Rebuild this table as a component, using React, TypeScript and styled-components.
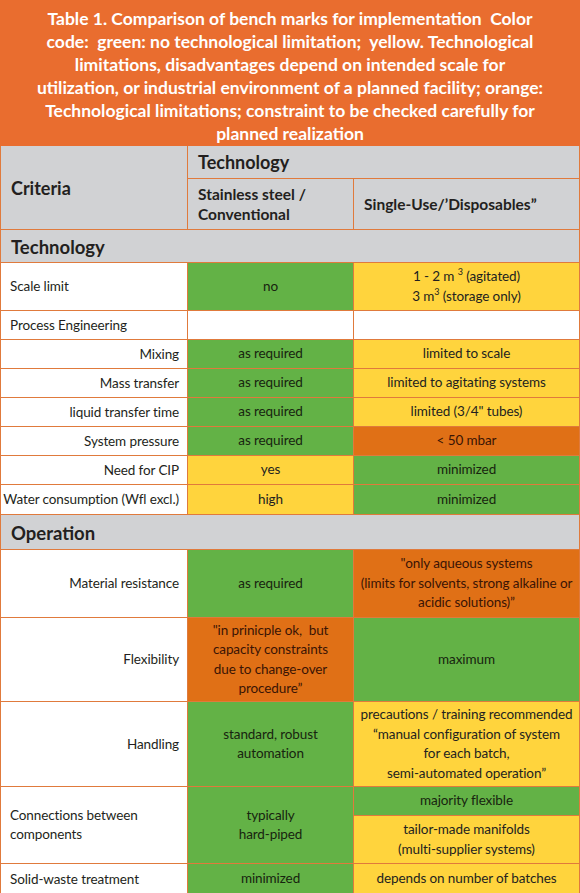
import React from 'react';
import styled, { createGlobalStyle } from 'styled-components';

type Tone = 'green' | 'yellow' | 'orange' | 'white';

const tones: Record<Tone, string> = {
  green: '#63b246',
  yellow: '#ffd43d',
  orange: '#e07016',
  white: '#ffffff',
};

const GlobalStyle = createGlobalStyle`
  html, body {
    margin: 0;
    padding: 0;
    background: #ffffff;
  }
  body {
    font-family: Lato, "Open Sans", sans-serif;
    color: #231f20;
  }
`;

// Orange caption block above the table
const Caption = styled.div`
  height: 146px;
  box-sizing: border-box;
  padding-top: 7px;
  background: #e96d2f;
  color: #ffffff;
  font-weight: 700;
  font-size: 17.5px;
  line-height: 23px;
  text-align: center;
  white-space: nowrap;
`;

// The table itself: grid lines come from the gap showing the orange background
const Sheet = styled.div`
  display: grid;
  grid-template-columns: 186px 165px 225px;
  grid-template-rows: 32px 50px 32px 47px 28px 28px 28px 28px 28px 28px 29px 34px 67px 83px 84px 28px 47px 30px;
  gap: 1px;
  padding: 0 1px;
  background: #e07a3c;
`;

const HeadCell = styled.div<{ $cols?: number; $rows?: number; $size?: number }>`
  grid-column: span ${(p) => p.$cols ?? 1};
  grid-row: span ${(p) => p.$rows ?? 1};
  background: #d1d2d4;
  display: flex;
  align-items: center;
  padding-left: 10px;
  font-size: ${(p) => p.$size ?? 18}px;
  font-weight: 700;
  line-height: 20px;
  color: #231f20;
`;

const SectionCell = styled.div`
  grid-column: span 3;
  background: #d1d2d4;
  display: flex;
  align-items: center;
  padding-left: 10px;
  padding-top: 1px;
  font-size: 18.5px;
  font-weight: 700;
`;

const LabelCell = styled.div<{ $right?: boolean; $rows?: number }>`
  grid-row: span ${(p) => p.$rows ?? 1};
  background: #ffffff;
  display: flex;
  align-items: center;
  justify-content: ${(p) => (p.$right ? 'flex-end' : 'flex-start')};
  padding: ${(p) => (p.$right ? '0 8px 0 0' : '0 0 0 9px')};
  font-size: 13.5px;
  line-height: 19px;
  white-space: nowrap;
  letter-spacing: -0.1px;
`;

const ValueCell = styled.div<{ $tone: Tone; $rows?: number }>`
  grid-row: span ${(p) => p.$rows ?? 1};
  background: ${(p) => tones[p.$tone]};
  display: flex;
  align-items: center;
  justify-content: center;
  text-align: center;
  font-size: 13.5px;
  line-height: 19.5px;
  white-space: nowrap;
  letter-spacing: -0.1px;
  color: ${(p) => (p.$tone === 'orange' ? '#3a1405' : p.$tone === 'green' ? '#17240f' : '#231f20')};
`;

// Keeps a cell's lines (and superscripts) together as one flow block
const Text = styled.span`
  display: block;
`;

const Sup = styled.sup`
  font-size: 9px;
  line-height: 0;
  vertical-align: 6px;
`;

export default function App() {
  return (
    <>
      <GlobalStyle />
      <Caption>
        Table 1. Comparison of bench marks for implementation&nbsp; Color
        <br />
        code:&nbsp; green: no technological limitation;&nbsp; yellow. Technological
        <br />
        limitations, disadvantages depend on intended scale for
        <br />
        utilization, or industrial environment of a planned facility; orange:
        <br />
        Technological limitations; constraint to be checked carefully for
        <br />
        planned realization
      </Caption>
      <Sheet>
        <HeadCell $rows={2}>Criteria</HeadCell>
        <HeadCell $cols={2}>Technology</HeadCell>
        <HeadCell $size={15.5}>
          <Text>
            Stainless steel /<br />
            Conventional
          </Text>
        </HeadCell>
        <HeadCell $size={15.5}>Single-Use/’Disposables”</HeadCell>

        <SectionCell>Technology</SectionCell>

        <LabelCell>Scale limit</LabelCell>
        <ValueCell $tone="green">no</ValueCell>
        <ValueCell $tone="yellow">
          <Text>
            1 - 2 m <Sup>3</Sup> (agitated)
            <br />3 m<Sup>3</Sup> (storage only)
          </Text>
        </ValueCell>

        <LabelCell>Process Engineering</LabelCell>
        <ValueCell $tone="white" />
        <ValueCell $tone="white" />

        <LabelCell $right>Mixing</LabelCell>
        <ValueCell $tone="green">as required</ValueCell>
        <ValueCell $tone="yellow">limited to scale</ValueCell>

        <LabelCell $right>Mass transfer</LabelCell>
        <ValueCell $tone="green">as required</ValueCell>
        <ValueCell $tone="yellow">limited to agitating systems</ValueCell>

        <LabelCell $right>liquid transfer time</LabelCell>
        <ValueCell $tone="green">as required</ValueCell>
        <ValueCell $tone="yellow">limited (3/4" tubes)</ValueCell>

        <LabelCell $right>System pressure</LabelCell>
        <ValueCell $tone="green">as required</ValueCell>
        <ValueCell $tone="orange">&lt; 50 mbar</ValueCell>

        <LabelCell $right>Need for CIP</LabelCell>
        <ValueCell $tone="yellow">yes</ValueCell>
        <ValueCell $tone="green">minimized</ValueCell>

        <LabelCell $right>Water consumption (Wfl excl.)</LabelCell>
        <ValueCell $tone="yellow">high</ValueCell>
        <ValueCell $tone="green">minimized</ValueCell>

        <SectionCell>Operation</SectionCell>

        <LabelCell $right>Material resistance</LabelCell>
        <ValueCell $tone="green">as required</ValueCell>
        <ValueCell $tone="orange">
          <Text>
            "only aqueous systems
            <br />
            (limits for solvents, strong alkaline or
            <br />
            acidic solutions)”
          </Text>
        </ValueCell>

        <LabelCell $right>Flexibility</LabelCell>
        <ValueCell $tone="orange">
          <Text>
            "in prinicple ok,&nbsp; but
            <br />
            capacity constraints
            <br />
            due to change-over
            <br />
            procedure”
          </Text>
        </ValueCell>
        <ValueCell $tone="green">maximum</ValueCell>

        <LabelCell $right>Handling</LabelCell>
        <ValueCell $tone="green">
          <Text>
            standard, robust
            <br />
            automation
          </Text>
        </ValueCell>
        <ValueCell $tone="yellow">
          <Text>
            precautions / training recommended
            <br />
            “manual configuration of system
            <br />
            for each batch,
            <br />
            semi-automated operation”
          </Text>
        </ValueCell>

        <LabelCell $rows={2}>
          <Text>
            Connections between
            <br />
            components
          </Text>
        </LabelCell>
        <ValueCell $tone="green" $rows={2}>
          <Text>
            typically
            <br />
            hard-piped
          </Text>
        </ValueCell>
        <ValueCell $tone="green">majority flexible</ValueCell>
        <ValueCell $tone="yellow">
          <Text>
            tailor-made manifolds
            <br />
            (multi-supplier systems)
          </Text>
        </ValueCell>

        <LabelCell>Solid-waste treatment</LabelCell>
        <ValueCell $tone="green">minimized</ValueCell>
        <ValueCell $tone="yellow">depends on number of batches</ValueCell>
      </Sheet>
    </>
  );
}
